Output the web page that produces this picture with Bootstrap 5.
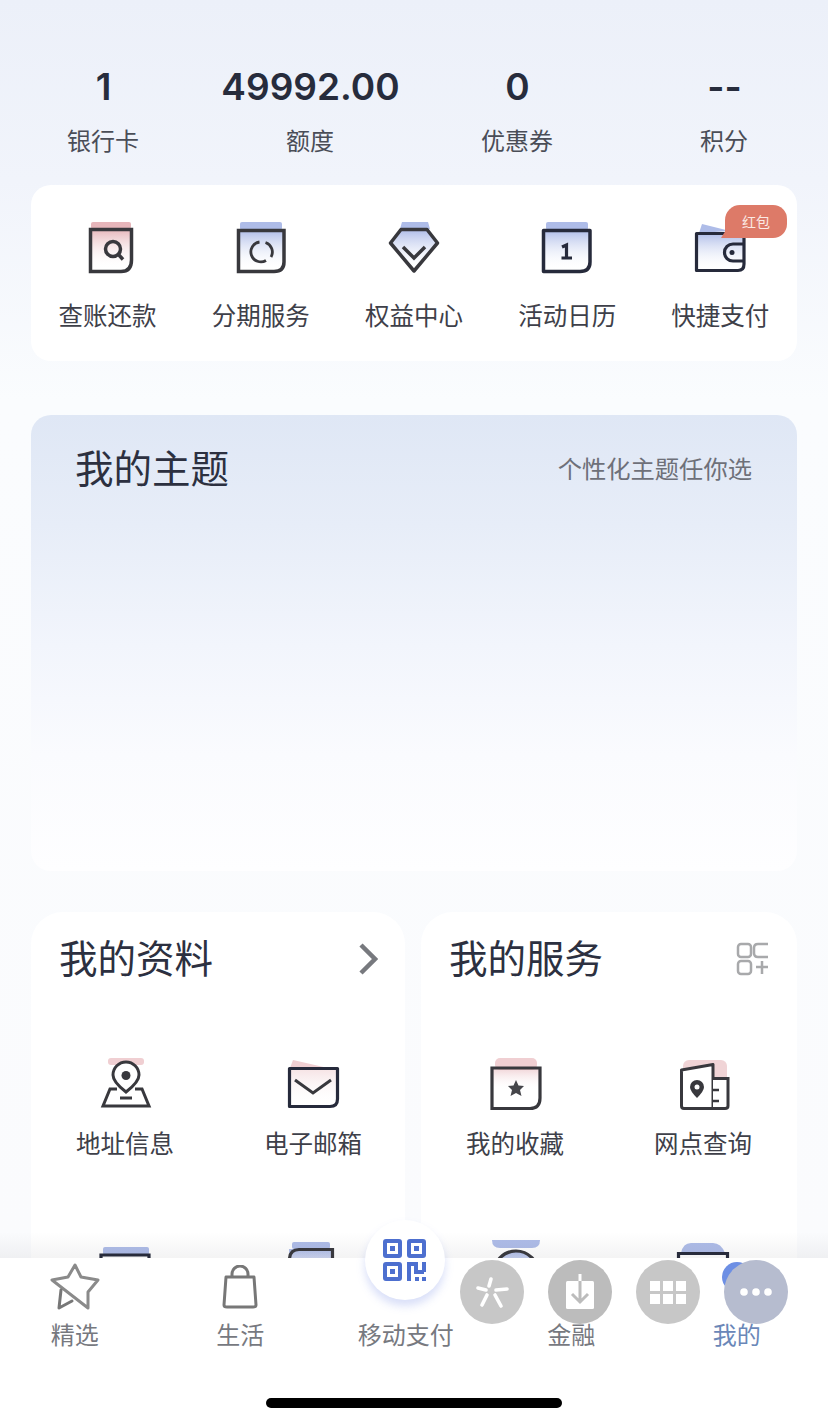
<!DOCTYPE html>
<html lang="zh-CN">
<head>
    <meta charset="UTF-8">
    <meta name="viewport" content="width=device-width, initial-scale=1.0">
    <title>我的</title>
    <link href="https://cdn.jsdelivr.net/npm/bootstrap@5.3.3/dist/css/bootstrap.min.css" rel="stylesheet">
    <style>
        html, body { height: 100%; }
        body {
            width: 828px; height: 1423px; overflow: hidden;
            font-family: "Noto Sans CJK SC", "Liberation Sans", sans-serif;
            color: #2b2f3a;
            background: linear-gradient(180deg, #ecf0f9 0, #f1f4fb 180px, #fafcfe 400px, #fafbfd 1258px);
        }
        .page-main { height: 1258px; overflow: hidden; padding: 64px 31px 0; }
        .stats-row { height: 121px; margin: 0 -31px; }
        .stat-cell { width: 207px; text-align: center; }
        .stat-num { font-family: "Inter", "Liberation Sans", sans-serif; font-size: 37px; font-weight: 600; line-height: 46px; color: #272c3c; }
        .stat-lbl { font-size: 24px; line-height: 36px; margin-top: 12px; margin-left: -1px; color: #4a4d57; }
        .quick-card { height: 176px; background: #fff; border-radius: 20px; padding-top: 37px; position: relative; }
        .quick-item { width: 153.2px; text-align: center; }
        .ico-box { height: 52px; display: flex; justify-content: center; }
        .item-lbl { font-size: 24.5px; line-height: 36px; margin-top: 23px; color: #3e4049; }
        .hb-tag { position: absolute; top: 20px; right: 10px; width: 62px; height: 33px; background: #dd7a68; color: #fbe9e4; font-size: 14px; line-height: 33px; text-align: center; border-radius: 15px 14px 14px 0; }
        .hb-tag::before { content: ""; position: absolute; left: -4px; bottom: 0; border-style: solid; border-width: 0 0 8px 5px; border-color: transparent transparent #dd7a68 transparent; }
        .theme-card { height: 456px; margin-top: 54px; border-radius: 20px; padding: 26px 45px 0 44px; background: linear-gradient(180deg, #dfe7f5 0, #e7edf8 110px, #f2f5fc 230px, #fafbfe 340px, #fefeff 100%); }
        .theme-title { font-size: 38.5px; line-height: 50px; color: #2c3040; }
        .theme-sub { font-size: 24.3px; color: #6e7079; padding-top: 9px; }
        .panel-row { margin-top: 41px; gap: 16px; }
        .info-panel { width: 376px; height: 400px; background: #fff; border-radius: 32px; padding: 19px 28px 0; flex: none; }
        .panel-narrow { width: 374px; padding-right: 27px; }
        .panel-title { font-size: 38.5px; line-height: 50px; color: #2c3040; }
        .head-ico { margin-top: 6px; }
        .sub-grid { margin-top: 77px; display: grid; grid-template-columns: 188px 188px; margin-left: -28px; }
        .sub-item { text-align: center; height: 182px; }
        .sub-item .ico-box { height: 56px; }
        .sub-item .item-lbl { margin-top: 11px; }
        .tab-bar { height: 165px; background: #fff; position: relative; display: flex; }
        .tab-bar::before { content: ""; position: absolute; left: 0; right: 0; top: -26px; height: 26px; background: linear-gradient(180deg, rgba(60,60,70,0), rgba(60,60,70,.06)); }
        .tab-item { width: 165.5px; flex: none; text-align: center; padding-top: 1px; font-size: 24px; color: #77797f; position: relative; }
        .tab-item:first-child { margin-left: -8px; }
        .tab-ico { height: 56px; display: flex; align-items: center; justify-content: center; }
        .tab-lbl { line-height: 36px; margin-top: 1px; }
        .qr-btn { position: absolute; left: 365px; top: -38px; width: 80px; height: 80px; border-radius: 50%; background: #fff; box-shadow: 0 6px 8px rgba(120,140,230,.28); display: flex; align-items: center; justify-content: center; }
        .float-dot { position: absolute; top: 2px; width: 64px; height: 64px; border-radius: 50%; background: #c7c7c7; display: flex; align-items: center; justify-content: center; }
        .dot-star { left: 460px; }
        .dot-down { left: 548px; background: #bcbcbc; }
        .dot-grid { left: 636px; }
        .dot-more { left: 724px; background: #b6bccf; }
        .active-lbl { color: #6a87b8; }
        .home-bar { position: absolute; left: 266px; bottom: 15px; width: 296px; height: 10px; background: #000; border-radius: 5px; }
        .blue-blob { position: absolute; left: 722px; top: 4px; width: 30px; height: 30px; border-radius: 50%; background: #6d8fe4; }
    </style>
</head>
<body>
    <svg width="0" height="0" class="position-absolute">
        <defs>
            <linearGradient id="redFade" x1="0" y1="0" x2="0" y2="1"><stop offset="0" stop-color="#e6b5ba"/><stop offset="1" stop-color="#fff" stop-opacity="0"/></linearGradient>
            <linearGradient id="blueFade" x1="0" y1="0" x2="0" y2="1"><stop offset="0" stop-color="#aebce8"/><stop offset="1" stop-color="#fff" stop-opacity="0"/></linearGradient>
        </defs>
    </svg>

    <div class="page-main">
        <div class="stats-row d-flex">
            <div class="stat-cell"><div class="stat-num">1</div><div class="stat-lbl">银行卡</div></div>
            <div class="stat-cell"><div class="stat-num">49992.00</div><div class="stat-lbl">额度</div></div>
            <div class="stat-cell"><div class="stat-num">0</div><div class="stat-lbl">优惠券</div></div>
            <div class="stat-cell"><div class="stat-num">--</div><div class="stat-lbl">积分</div></div>
        </div>

        <div class="quick-card d-flex">
            <div class="quick-item">
                <div class="ico-box">
                    <svg width="56" height="52" viewBox="0 0 56 52" fill="none">
                        <rect x="11" y="0" width="40" height="7" rx="2" fill="#e6b5ba"/>
                        <rect x="10" y="7" width="42" height="40" fill="url(#redFade)"/>
                        <path d="M10.5 7.5H51.5V38Q51.5 49.5 41 49.5H10.5Z" stroke="#38383d" stroke-width="3.5"/>
                        <circle cx="33" cy="27" r="7.5" stroke="#38383d" stroke-width="3.5"/>
                        <path d="M38.5 32.5L43 37.5" stroke="#38383d" stroke-width="3.5"/>
                    </svg>
                </div>
                <div class="item-lbl">查账还款</div>
            </div>
            <div class="quick-item">
                <div class="ico-box">
                    <svg width="56" height="52" viewBox="0 0 56 52" fill="none">
                        <rect x="7" y="0" width="42" height="8" rx="2" fill="#aebce8"/>
                        <rect x="4" y="8" width="48" height="40" fill="url(#blueFade)"/>
                        <path d="M5.5 8.5H51V40Q51 49.5 41 49.5H5.5Z" stroke="#38383d" stroke-width="3.5"/>
                        <path d="M26.5 20A10 10 0 1 0 33 38.5" stroke="#38383d" stroke-width="2.8"/>
                        <path d="M32.5 20.5A10 10 0 0 1 38 35" stroke="#38383d" stroke-width="2.8"/>
                    </svg>
                </div>
                <div class="item-lbl">分期服务</div>
            </div>
            <div class="quick-item">
                <div class="ico-box">
                    <svg width="52" height="52" viewBox="0 0 52 52" fill="none">
                        <path d="M12 7L14 0H40L42 7Z" fill="#aebce8"/>
                        <path d="M2.5 21L13 7.5H39L49.5 21L26 49Z" fill="url(#blueFade)"/>
                        <path d="M2.5 21L13 7.5H39L49.5 21L26 49Z" stroke="#38383d" stroke-width="3.5" stroke-linejoin="round"/>
                        <path d="M15 25L26 36L37 25" stroke="#38383d" stroke-width="3.5"/>
                    </svg>
                </div>
                <div class="item-lbl">权益中心</div>
            </div>
            <div class="quick-item">
                <div class="ico-box">
                    <svg width="52" height="52" viewBox="0 0 52 52" fill="none">
                        <rect x="5" y="0" width="42" height="8" rx="2" fill="#aebce8"/>
                        <rect x="2" y="8" width="48" height="40" fill="url(#blueFade)"/>
                        <path d="M2.5 8.5H49V40Q49 49.5 39 49.5H2.5Z" stroke="#262a3b" stroke-width="3.5" stroke-linejoin="round"/>
                        <path d="M21 25L25.5 23V36M20.5 36H31" stroke="#262a3b" stroke-width="3.2"/>
                    </svg>
                </div>
                <div class="item-lbl">活动日历</div>
            </div>
            <div class="quick-item">
                <div class="ico-box">
                    <svg width="52" height="52" viewBox="0 0 52 52" fill="none">
                        <path d="M5 11L8 2L36 9Z" fill="#aebce8"/>
                        <rect x="2" y="11" width="48" height="38" fill="url(#blueFade)"/>
                        <path d="M2.5 11.5H50V42Q50 48.5 44 48.5H2.5Z" stroke="#262a3b" stroke-width="3.2" stroke-linejoin="round"/>
                        <path d="M50 22H39A8.5 8.5 0 0 0 39 39H50" stroke="#262a3b" stroke-width="3.2"/>
                        <circle cx="38" cy="30.5" r="2.5" fill="#262a3b"/>
                    </svg>
                </div>
                <div class="item-lbl">快捷支付</div>
            </div>
            <div class="hb-tag">红包</div>
        </div>

        <div class="theme-card d-flex justify-content-between">
            <div class="theme-title">我的主题</div>
            <div class="theme-sub">个性化主题任你选</div>
        </div>

        <div class="panel-row d-flex">
            <div class="info-panel panel-narrow">
                <div class="d-flex justify-content-between align-items-center">
                    <div class="panel-title">我的资料</div>
                    <svg class="head-ico" width="20" height="34" viewBox="0 0 20 34" fill="none"><path d="M3 3L17 17L3 31" stroke="#77797e" stroke-width="4.5"/></svg>
                </div>
                <div class="sub-grid">
                    <div class="sub-item">
                        <div class="ico-box">
                            <svg width="56" height="56" viewBox="0 0 56 56" fill="none">
                                <rect x="11" y="0" width="36" height="7" rx="3" fill="#f0cfd2"/>
                                <path d="M29 34Q16 24 16 17A13 13 0 0 1 42 17Q42 24 29 34Z" fill="#fff" stroke="#38383d" stroke-width="3"/>
                                <circle cx="29" cy="17.5" r="4.5" fill="#38383d"/>
                                <path d="M20 31H13L6 48H52L45 31H38" stroke="#38383d" stroke-width="3"/>
                                <path d="M23 40H35" stroke="#38383d" stroke-width="3"/>
                            </svg>
                        </div>
                        <div class="item-lbl">地址信息</div>
                    </div>
                    <div class="sub-item">
                        <div class="ico-box">
                            <svg width="56" height="56" viewBox="0 0 56 56" fill="none">
                                <path d="M5 10L8 2L43 10Z" fill="#f0cfd2"/>
                                <rect x="3" y="10" width="50" height="38" fill="url(#redFade)" opacity=".4"/>
                                <path d="M4.5 10.5H52.5V41Q52.5 48.5 45 48.5H4.5Z" stroke="#262a3b" stroke-width="3.2" stroke-linejoin="round"/>
                                <path d="M10 22L28 35L46 22" stroke="#38383d" stroke-width="3"/>
                            </svg>
                        </div>
                        <div class="item-lbl">电子邮箱</div>
                    </div>
                    <div class="sub-item">
                        <div class="ico-box">
                            <svg width="56" height="56" viewBox="0 0 56 56" fill="none">
                                <rect x="6" y="7" width="46" height="8" rx="2" fill="#aebce8"/>
                                <path d="M4 15H52V56H4Z" stroke="#262a3b" stroke-width="3.2"/>
                            </svg>
                        </div>
                    </div>
                    <div class="sub-item">
                        <div class="ico-box">
                            <svg width="56" height="56" viewBox="0 0 56 56" fill="none">
                                <rect x="7" y="2" width="38" height="7" rx="2" fill="#aebce8"/>
                                <rect x="4" y="9" width="44" height="42" fill="url(#blueFade)"/>
                                <path d="M4.5 20Q4.5 9.5 14 9.5H47.5V56H4.5Z" stroke="#38383d" stroke-width="3.2"/>
                            </svg>
                        </div>
                    </div>
                </div>
            </div>
            <div class="info-panel">
                <div class="d-flex justify-content-between align-items-center">
                    <div class="panel-title">我的服务</div>
                    <svg class="head-ico" width="33" height="34" viewBox="0 0 33 34" fill="none" stroke="#a8a9ab" stroke-width="2.5">
                        <rect x="2" y="2" width="13" height="13" rx="3"/>
                        <path d="M32 2H22Q18 2 18 6V11Q18 15 22 15H32"/>
                        <rect x="2" y="19" width="13" height="13" rx="3"/>
                        <path d="M20 25H32M26 19V32"/>
                    </svg>
                </div>
                <div class="sub-grid">
                    <div class="sub-item">
                        <div class="ico-box">
                            <svg width="56" height="56" viewBox="0 0 56 56" fill="none">
                                <rect x="8" y="0" width="42" height="12" rx="5" fill="#f0cfd2"/>
                                <rect x="5" y="10" width="48" height="22" fill="url(#redFade)" opacity=".6"/>
                                <path d="M5 10H53V40Q53 50.5 43 50.5H5Z" stroke="#38383d" stroke-width="3.2"/>
                                <path d="M29 22L31.5 27.5L37 28L33 32L34.5 38L29 35L23.5 38L25 32L21 28L26.5 27.5Z" fill="#45454a"/>
                            </svg>
                        </div>
                        <div class="item-lbl">我的收藏</div>
                    </div>
                    <div class="sub-item">
                        <div class="ico-box">
                            <svg width="56" height="56" viewBox="0 0 56 56" fill="none">
                                <rect x="8" y="2" width="44" height="24" rx="6" fill="#f0d4d6"/>
                                <path d="M6.5 12L38 6.5V50.5H9Q6.5 50.5 6.5 48Z" fill="#fff" stroke="#38383d" stroke-width="3" stroke-linejoin="round"/>
                                <path d="M38 20.5H53V48Q53 50.5 50 50.5H38" fill="#fff" stroke="#38383d" stroke-width="3"/>
                                <path d="M22 40Q15 33 15 29A7 7 0 0 1 29 29Q29 33 22 40Z" fill="#38383d"/>
                                <circle cx="22" cy="29" r="2.5" fill="#fff"/>
                                <path d="M38 32H44M38 43H44" stroke="#38383d" stroke-width="2.5"/>
                            </svg>
                        </div>
                        <div class="item-lbl">网点查询</div>
                    </div>
                    <div class="sub-item">
                        <div class="ico-box">
                            <svg width="56" height="56" viewBox="0 0 56 56" fill="none">
                                <path d="M5 0H53Q53 8 45 8H13Q5 8 5 0Z" fill="#aebce8"/>
                                <circle cx="29" cy="33" r="22" stroke="#38383d" stroke-width="3.2" fill="url(#blueFade)"/>
                            </svg>
                        </div>
                    </div>
                    <div class="sub-item">
                        <div class="ico-box">
                            <svg width="56" height="56" viewBox="0 0 56 56" fill="none">
                                <path d="M6 13Q8 3 16 3H38Q46 3 50 13Z" fill="#aebce8"/>
                                <path d="M3.5 13.5H52.5V56H3.5Z" stroke="#262a3b" stroke-width="3.2"/>
                            </svg>
                        </div>
                    </div>
                </div>
            </div>
        </div>
    </div>

    <div class="tab-bar">
        <div class="tab-item">
            <div class="tab-ico">
                <svg width="50" height="48" viewBox="0 0 50 48" fill="none" stroke-width="3" stroke-linejoin="round" stroke-linecap="round">
                    <path d="M2 17L18 14L25 2L31 14L48 17L38 29L38 45L2 17" stroke="#8a8a8a"/>
                    <path d="M11 27L9 45L22 38" stroke="#777"/>
                </svg>
            </div>
            <div class="tab-lbl">精选</div>
        </div>
        <div class="tab-item">
            <div class="tab-ico">
                <svg width="36" height="44" viewBox="0 0 36 44" fill="none" stroke="#777" stroke-width="3">
                    <path d="M4 12H32L34 40Q34 42 31 42H5Q2 42 2 40Z" stroke-linejoin="round"/>
                    <path d="M10 12V9A8 8 0 0 1 26 9V12"/>
                </svg>
            </div>
            <div class="tab-lbl">生活</div>
        </div>
        <div class="tab-item">
            <div class="tab-ico"></div>
            <div class="tab-lbl">移动支付</div>
        </div>
        <div class="tab-item">
            <div class="tab-ico"></div>
            <div class="tab-lbl">金融</div>
        </div>
        <div class="tab-item">
            <div class="tab-ico"></div>
            <div class="tab-lbl active-lbl">我的</div>
        </div>

        <div class="qr-btn">
            <svg width="44" height="43" viewBox="0 0 44 43" fill="none" stroke="#4d6fcf" stroke-width="4">
                <rect x="2" y="2" width="15" height="15" rx="1"/>
                <rect x="26" y="2" width="15" height="15" rx="1"/>
                <rect x="2" y="25" width="15" height="15" rx="1"/>
                <rect x="7" y="7" width="5" height="5" fill="#4d6fcf" stroke="none"/>
                <rect x="31" y="7" width="5" height="5" fill="#4d6fcf" stroke="none"/>
                <rect x="7" y="30" width="5" height="5" fill="#4d6fcf" stroke="none"/>
                <path d="M26 42V25H33V33H41M41 23V33"/>
                <rect x="32" y="38" width="4" height="4" fill="#4d6fcf" stroke="none"/>
                <rect x="39" y="38" width="4" height="4" fill="#4d6fcf" stroke="none"/>
            </svg>
        </div>

        <div class="blue-blob"></div>
        <div class="float-dot dot-star">
            <svg width="34" height="34" viewBox="0 0 34 34" fill="none" stroke="#fff" stroke-width="3.6" stroke-linecap="round">
                <path d="M16 4L14 11M3 13L11 15M21 15L32 14M12 20L7 30M20 20L26 31"/>
            </svg>
        </div>
        <div class="float-dot dot-down">
            <svg width="30" height="36" viewBox="0 0 30 36">
                <rect x="1" y="7" width="28" height="28" rx="1.5" fill="#fff"/>
                <path d="M15 7V28M7 20L15 28L23 20" fill="none" stroke="#bcbcbc" stroke-width="3"/>
                <path d="M15 0V7" stroke="#fff" stroke-width="3"/>
            </svg>
        </div>
        <div class="float-dot dot-grid">
            <svg width="36" height="23" viewBox="0 0 36 23" fill="#fff">
                <rect x="0" y="0" width="10" height="10"/><rect x="13" y="0" width="10" height="10"/><rect x="26" y="0" width="10" height="10"/>
                <rect x="0" y="13" width="10" height="10"/><rect x="13" y="13" width="10" height="10"/><rect x="26" y="13" width="10" height="10"/>
            </svg>
        </div>
        <div class="float-dot dot-more">
            <svg width="32" height="8" viewBox="0 0 32 8" fill="#fff">
                <circle cx="4" cy="4" r="3.8"/><circle cx="16" cy="4" r="3.8"/><circle cx="28" cy="4" r="3.8"/>
            </svg>
        </div>
        <div class="home-bar"></div>
    </div>

    <script src="https://cdn.jsdelivr.net/npm/bootstrap@5.3.3/dist/js/bootstrap.bundle.min.js"></script>
</body>
</html>
